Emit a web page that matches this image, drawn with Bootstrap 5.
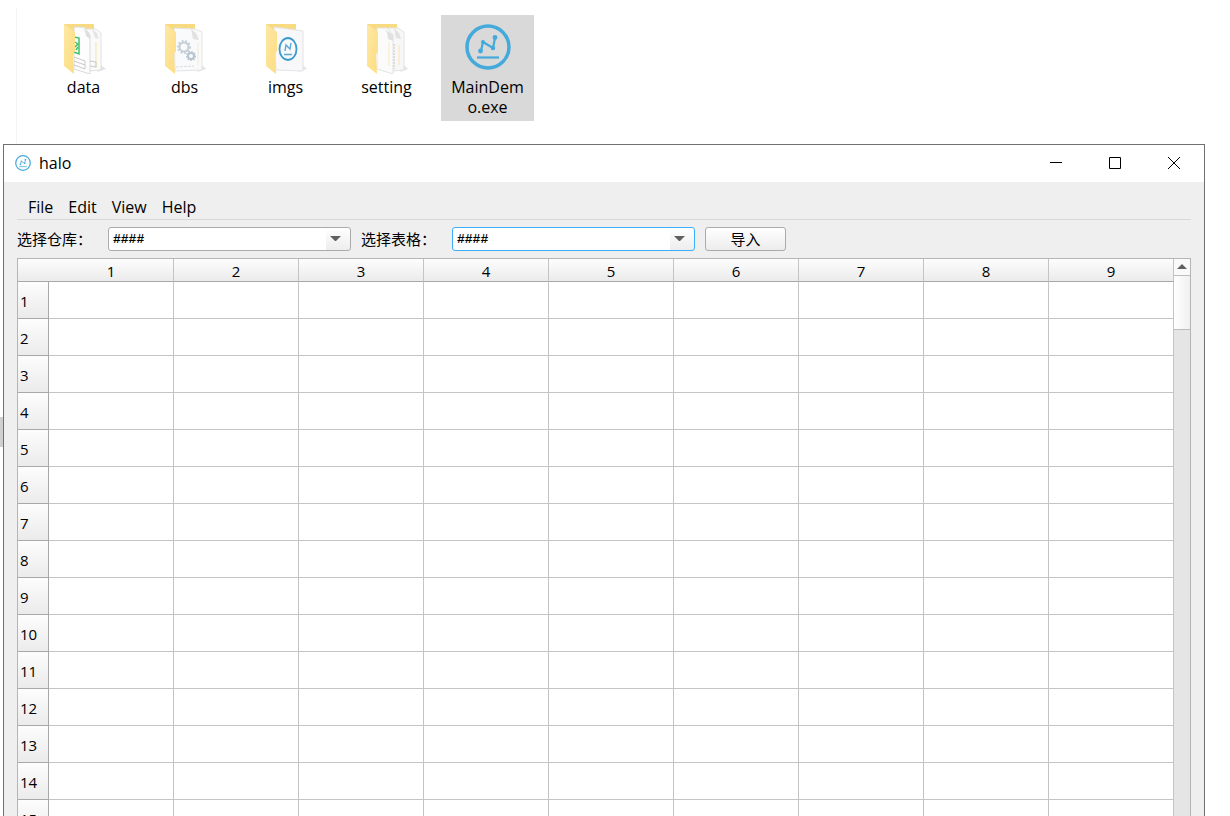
<!DOCTYPE html>
<html lang="zh-CN">
<head>
<meta charset="utf-8">
<meta name="viewport" content="width=device-width, initial-scale=1">
<title>halo</title>
<link href="https://cdn.jsdelivr.net/npm/bootstrap@5.3.0/dist/css/bootstrap.min.css" rel="stylesheet">
<style>
  body { font: 16px/20px "Open Sans", "Noto Sans CJK SC", sans-serif; color: #000; background: #fff; }
  /* file explorer pane */
  .explorer { height: 136px; margin: 8px 0 0 16px; border-left: 1px solid #f3f3f3; padding: 7px 20px 0; gap: 8px; }
  .file-item { width: 93px; padding: 5px 8px 4px; color: #000; word-break: break-all; }
  .file-item svg { width: 54px; height: 54px; margin-bottom: 3px; }
  .file-item.selected { background: #d9d9d9; }
  .edge-tab { left: 0; top: 417px; width: 3px; height: 30px; background: #d0d0d0; }
  /* application window */
  .app-window { margin: 0 25px 0 3px; border: 1px solid #707070; border-bottom: 0; background: #efefef; min-height: 0; }
  .title-bar { height: 37px; padding: 0 1px 2px 11px; background: #fff; }
  .win-btn { width: 59px; height: 35px; border: 0; background: none; padding: 0; }
  .client { padding: 11px 13px 0; min-height: 0; }
  .menu-row { height: 27px; padding: 2px 11px 0; gap: 15px; border-bottom: 1px solid #d8d8d8; }
  .menu-row a { color: #000; }
  .tool-row { height: 38px; gap: 10px; }
  .tool-row label { width: 81px; font-size: 15px; white-space: nowrap; }
  .combo { width: 243px; height: 24px; padding: 2px 26px 0 4px; border: 1px solid #ababab; border-radius: 3px; color: #000;
    font: 700 13px/20px "Liberation Mono", monospace;
    background: #fff url("data:image/svg+xml,%3Csvg xmlns='http://www.w3.org/2000/svg' width='24' height='22'%3E%3ClinearGradient id='g' x2='0' y2='1'%3E%3Cstop stop-color='%23fff'/%3E%3Cstop offset='1' stop-color='%23ededed'/%3E%3C/linearGradient%3E%3Cpath fill='url(%23g)' d='M0 0h24v22H0z'/%3E%3Cpath fill='%23606060' d='M4 8h11l-5 5h-1z'/%3E%3C/svg%3E") right center / 24px 22px no-repeat; }
  .combo.active { border-color: #3daefb; }
  .import-btn { width: 81px; height: 24px; padding: 0; border: 1px solid #ababab; border-radius: 3px; color: #000; font-size: 15px; line-height: 20px; background: linear-gradient(#fff, #ececec); }
  /* data grid */
  .sheet { border: 1px solid #b5b5b5; border-bottom: 0; min-height: 0; }
  .grid-view { table-layout: fixed; border-collapse: separate; border-spacing: 0; background: #fff; }
  .grid-view th, .grid-view td { padding: 0; font-weight: 400; border-right: 1px solid #c4c4c4; border-bottom: 1px solid #c4c4c4; }
  .grid-view thead th { height: 23px; padding-top: 2px; line-height: 20px; font-size: 15px; text-align: center; border-bottom-color: #a8a8a8; background: linear-gradient(#fdfdfd, #ebebeb); }
  .grid-view thead .corner { width: 31px; border-right: 0; }
  .grid-view tbody th { height: 37px; padding: 2px 0 0 2px; font-size: 15px; border-color: #a8a8a8; background: linear-gradient(#fdfdfd, #ebebeb); }
  .scroll-track { width: 16px; background: #e5e5e5; }
  .scroll-up { height: 17px; padding: 0 1px 2px 0; border: 0; border-bottom: 1px solid #bdbdbd; background: #fafafa; }
  .scroll-thumb { height: 54px; border-bottom: 1px solid #bdbdbd; background: linear-gradient(90deg, #fff, #f0f0f0); }
</style>
</head>
<body class="vh-100 overflow-hidden d-flex flex-column position-relative">

<svg width="0" height="0" class="position-absolute" aria-hidden="true">
  <defs>
    <linearGradient id="flap" x2="1" y2="1"><stop stop-color="#fee8a4"/><stop offset="1" stop-color="#fcdc80"/></linearGradient>
    <symbol id="logo" viewBox="0 0 46 46">
      <circle cx="23" cy="23" r="21" fill="none" stroke="#43aadb" stroke-width="3.500"/>
      <path d="M16 27l2-9 10 6 2-10" fill="none" stroke="#43aadb" stroke-width="2.200"/>
      <g fill="#43aadb"><circle cx="15.500" cy="27" r="2.400"/><circle cx="18" cy="18" r="2"/><circle cx="28" cy="24" r="2.200"/><circle cx="30" cy="13.500" r="2.400"/></g>
      <path d="M12 33.500h22" stroke="#43aadb" stroke-width="2.200"/>
    </symbol>
    <symbol id="folder-back" viewBox="0 0 54 54">
      <path d="M7 4h30v30H7z" fill="#f8da80"/>
    </symbol>
    <symbol id="folder-front" viewBox="0 0 54 54">
      <path d="M7 4l11 8v19l-2 3 1 20L7 46z" fill="url(#flap)"/>
    </symbol>
  </defs>
</svg>

<div class="edge-tab position-absolute"></div>

<div class="explorer d-flex align-items-start flex-shrink-0">
  <a href="#" class="file-item d-flex flex-column align-items-center text-center text-decoration-none">
    <svg viewBox="0 0 54 54" aria-hidden="true">
      <use href="#folder-back"/>
      <path d="M40 52l9-3-5-4z" fill="#e4e4e4"/>
      <path d="M28 9h11l5 4v37l-12 1z" fill="#fafafa" stroke="#e2e2e2"/>
      <path d="M35 9l3 9 4 1-2-6z" fill="#e6e6e6"/><path d="M39 22v26" stroke="#f5e4b0"/>
      <path d="M17 7h10l6 8v39l-16-5z" fill="#fdfdfd" stroke="#dadada"/>
      <path d="M24 7q5 4 5 9l4 3v-5z" fill="#dedede"/>
      <path d="M17 17l5 1v16l-5-2" fill="none" stroke="#3fc267" stroke-width="1.500"/>
      <path d="M18 22l3 2-3 3M19 30l2-3" fill="none" stroke="#3fc267" stroke-width="1.500"/>
      <path d="M17 37l11 4v8l-11-4M17 41l11 4M33 41l6 1v5l-6-1" fill="none" stroke="#c9c9c9"/>
      <use href="#folder-front"/>
    </svg>
    <span>data</span>
  </a>
  <a href="#" class="file-item d-flex flex-column align-items-center text-center text-decoration-none">
    <svg viewBox="0 0 54 54" aria-hidden="true">
      <use href="#folder-back"/>
      <path d="M39 52l9-3-4-4z" fill="#e4e4e4"/>
      <path d="M16 8l21 1 7 3v38l-27 1z" fill="#f9fafb" stroke="#e4e4e4"/>
      <path d="M33 9l2 10 6 1-3-7z" fill="#e2e2e2"/>
      <circle cx="26" cy="27" r="4.500" fill="none" stroke="#c5cfd8" stroke-width="2"/>
      <circle cx="26" cy="27" r="6" fill="none" stroke="#c5cfd8" stroke-width="2" stroke-dasharray="1.800 1.800"/>
      <circle cx="33" cy="36" r="3" fill="none" stroke="#b7c3ce" stroke-width="2"/>
      <circle cx="33" cy="36" r="4.500" fill="none" stroke="#b7c3ce" stroke-width="1.200" stroke-dasharray="1.500 1.500"/>
      <path d="M18 47l18-1" stroke="#ddd" stroke-dasharray="3 1"/><path d="M40 23v22" stroke="#f5ead0"/>
      <use href="#folder-front"/>
    </svg>
    <span>dbs</span>
  </a>
  <a href="#" class="file-item d-flex flex-column align-items-center text-center text-decoration-none">
    <svg viewBox="0 0 54 54" aria-hidden="true">
      <use href="#folder-back"/>
      <path d="M39 52l9-3-4-4z" fill="#e4e4e4"/>
      <path d="M15 7l29 4v40l-27-1z" fill="#f8f8fa" stroke="#e4e4e4"/>
      <ellipse cx="29" cy="29" rx="8.500" ry="11" fill="none" stroke="#3a9ccd" stroke-width="1.800"/>
      <path d="M26 31l1-6 4 4 1-6M25 34.500h8" fill="none" stroke="#5aaad6" stroke-width="1.400"/>
      <use href="#folder-front"/>
    </svg>
    <span>imgs</span>
  </a>
  <a href="#" class="file-item d-flex flex-column align-items-center text-center text-decoration-none">
    <svg viewBox="0 0 54 54" aria-hidden="true">
      <use href="#folder-back"/>
      <path d="M40 52l8-3-4-4z" fill="#e4e4e4"/>
      <path d="M28 8h10l6 4v38l-12 1z" fill="#f7f7f7" stroke="#e4e4e4"/>
      <path d="M34 8l2 10 5 1-2-6z" fill="#e2e2e2"/><path d="M39 25v20" stroke="#f6e6ba"/>
      <path d="M17 8h10l6 7v39l-16-5z" fill="#fbfbfb" stroke="#e4e4e4"/>
      <path d="M23 8q5 3 5 11l5 2v-6z" fill="#e0e0e0"/><path d="M29 22v24" stroke="#f8ebc6"/>
      <path d="M34 24v25" stroke="#ddd" stroke-width="2" stroke-dasharray="2 1"/>
      <use href="#folder-front"/>
    </svg>
    <span>setting</span>
  </a>
  <a href="#" class="file-item selected d-flex flex-column align-items-center text-center text-decoration-none">
    <svg viewBox="-4 -4 54 54" aria-hidden="true"><use href="#logo" width="46" height="46"/></svg>
    <span>MainDemo.exe</span>
  </a>
</div>

<main class="app-window d-flex flex-column flex-fill">
  <header class="title-bar d-flex align-items-center flex-shrink-0">
    <svg width="16" height="16" aria-hidden="true"><use href="#logo"/></svg>
    <span class="ms-2">halo</span>
    <div class="ms-auto d-flex">
      <button class="win-btn" type="button" aria-label="最小化"><svg width="12" height="12" class="d-block mx-auto"><path d="M0 5.500h12" stroke="#000"/></svg></button>
      <button class="win-btn" type="button" aria-label="最大化"><svg width="12" height="12" class="d-block mx-auto"><path d="M.5.500h11v11H.5z" fill="none" stroke="#000"/></svg></button>
      <button class="win-btn" type="button" aria-label="关闭"><svg width="12" height="12" class="d-block mx-auto"><path d="M0 0l12 12M12 0L0 12" stroke="#000"/></svg></button>
    </div>
  </header>

  <div class="client d-flex flex-column flex-fill">
    <nav class="menu-row d-flex align-items-center flex-shrink-0">
      <a href="#" class="text-decoration-none">File</a>
      <a href="#" class="text-decoration-none">Edit</a>
      <a href="#" class="text-decoration-none">View</a>
      <a href="#" class="text-decoration-none">Help</a>
    </nav>
    <div class="tool-row d-flex align-items-center flex-shrink-0">
      <label for="store">选择仓库：</label>
      <select id="store" class="form-select combo"><option>####</option></select>
      <label for="sheet">选择表格：</label>
      <select id="sheet" class="form-select combo active"><option>####</option></select>
      <button type="button" class="btn import-btn">导入</button>
    </div>

    <div class="sheet d-flex flex-fill overflow-hidden">
      <div class="flex-fill overflow-hidden">
        <table class="grid-view w-100">
          <thead>
            <tr><th class="corner"></th><th>1</th><th>2</th><th>3</th><th>4</th><th>5</th><th>6</th><th>7</th><th>8</th><th>9</th></tr>
          </thead>
          <tbody id="rows"></tbody>
        </table>
      </div>
      <div class="scroll-track d-flex flex-column flex-shrink-0">
        <button type="button" class="scroll-up" aria-label="向上滚动"><svg width="10" height="5" class="d-block mx-auto"><path d="M0 5l5-5 5 5z" fill="#606060"/></svg></button>
        <div class="scroll-thumb"></div>
      </div>
    </div>
  </div>
</main>

<script src="https://cdn.jsdelivr.net/npm/bootstrap@5.3.0/dist/js/bootstrap.bundle.min.js"></script>
<script>
  const rows = document.getElementById('rows');
  for (let n = 1; n <= 15; n++) {
    const tr = rows.insertRow();
    const th = document.createElement('th');
    th.scope = 'row';
    th.textContent = n;
    tr.append(th);
    for (let c = 0; c < 9; c++) tr.insertCell();
  }
</script>
</body>
</html>
